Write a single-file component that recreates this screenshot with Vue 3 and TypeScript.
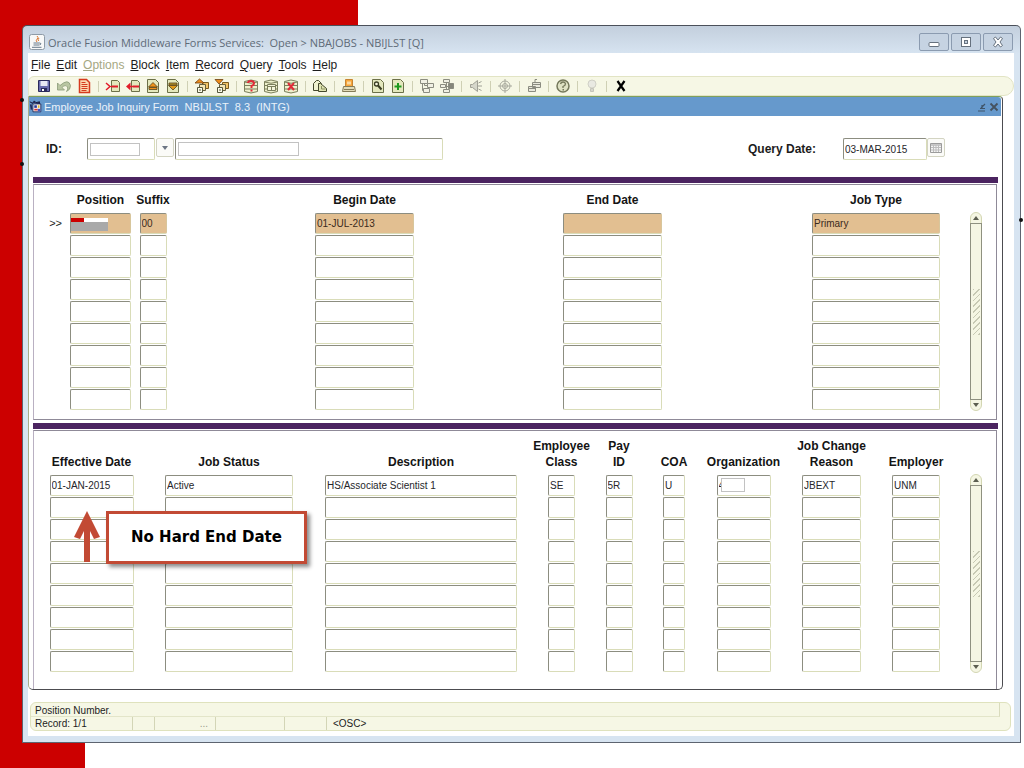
<script setup lang="ts">
import { ref } from 'vue'

interface Column {
  key: string
  lines: string[]
}

interface Tool {
  name: string
  art: string
}

const menus = ['File', 'Edit', 'Options', 'Block', 'Item', 'Record', 'Query', 'Tools', 'Help']

const page = '<path d="M2.5 1.5h8l3 3v10h-11z" fill="#e4e8bd" stroke="#6c7048"/>'
const drum =
  '<path d="M1.500 3.500q6.500-3 13 0v10q-6.500 3-13 0z" fill="#eef0cc" stroke="#7b7f5c"/><path d="M1.500 4q6.500 2.500 13 0M1.500 7.500h13M1.500 11h13" fill="none" stroke="#7b7f5c"/>'
const cards =
  '<path d="M8.500 4.500h6v6h-6z" fill="#f0c468" stroke="#7a5a1c"/><path d="M5.500 6.500h6v6h-6z" fill="#f4e6b4" stroke="#66603c"/><path d="M3.500 9.500h5v5h-5z" fill="#fbfbe8" stroke="#55573c"/><path d="M5 12h2" stroke="#55573c"/>'

const toolGroups: Tool[][] = [
  [
    { name: 'Save', art: '<path d="M2.500 2.500h11v11h-11z" fill="#6a6cae" stroke="#2a2a5c"/><path d="M4.500 3h7v5h-7z" fill="#e8e8f4"/><path d="M5 10h6v3.500H5z" fill="#2a2a5c"/><path d="M6 11h2v2H6z" fill="#fff"/>' },
    { name: 'Rollback', art: '<path d="M1.500 5v7h7L6 9.500q3.500-3.500 5.500-.5 1 2-1 4.500 4-1.500 4-6Q12.500 0 4 7.500z" fill="#b9c6a2" stroke="#8a9a78" stroke-width=".8"/>' },
    { name: 'Select', art: '<path d="M3.500 1.500h7l3 3v10h-10z" fill="#fbd9b0" stroke="#d63a1e" stroke-width="1.500"/><path d="M5.500 4.500h4M5.500 6.500h6M5.500 8.500h6M5.500 10.500h6M5.500 12.500h5" stroke="#d63a1e"/>' }
  ],
  [
    { name: 'Insert Record', art: '<path d="M6.500 2.500h6l2 2v9h-8z" fill="#e4e8bd" stroke="#6c7048"/><path d="M7 7.500h6v2H7z" fill="#e11d2b"/><path d="M1 5l4 3.500L1 12" fill="none" stroke="#e11d2b" stroke-width="1.500"/><path d="M5 8.500h2" stroke="#e11d2b"/>' },
    { name: 'Remove Record', art: '<path d="M6.500 2.500h6l2 2v9h-8z" fill="#e4e8bd" stroke="#6c7048"/><path d="M8 7.500h6v2H8z" fill="#e11d2b"/><path d="M5.500 4.500v8L1 8.500z" fill="#e11d2b"/><path d="M5 8.500h3" stroke="#e11d2b" stroke-width="1.500"/>' },
    { name: 'Previous Record', art: page + '<path d="M8 4.500l4.500 4.500h-9z" fill="#f0921c" stroke="#55431c" stroke-width=".8"/><path d="M4 9.500h8v2H4z" fill="#f0921c" stroke="#55431c" stroke-width=".8"/>' },
    { name: 'Next Record', art: page + '<path d="M4 5h8v2H4z" fill="#bd9a2e" stroke="#55431c" stroke-width=".8"/><path d="M3.500 7.500h9L8 12z" fill="#e09a1c" stroke="#55431c" stroke-width=".8"/>' }
  ],
  [
    { name: 'Previous Block', art: cards + '<path d="M5.500 1L10 5H1z" fill="#ef8c1a" stroke="#6b3f10" stroke-width=".8"/>' },
    { name: 'Next Block', art: cards + '<path d="M1 1.500h8L5 6z" fill="#ef8c1a" stroke="#6b3f10" stroke-width=".8"/>' }
  ],
  [
    { name: 'Enter Query', art: drum + '<path d="M5 5q0-2 3-2t3 2.500Q11 7 8.500 8v2" fill="none" stroke="#e02a38" stroke-width="2"/><path d="M7.500 11.500h2v2h-2z" fill="#e02a38"/>' },
    { name: 'Execute Query', art: drum + '<path d="M4.500 6.500h8v6h-8z" fill="#f4f5dc" stroke="#7b7f5c"/><path d="M4.500 8.500h8M8.500 8v4" stroke="#7b7f5c"/>' },
    { name: 'Cancel Query', art: drum + '<path d="M5 5l6 7M11 5l-6 7" stroke="#e02a38" stroke-width="2"/>' }
  ],
  [
    { name: 'View Messages', art: '<path d="M1.500 5.500l3-3h2l3 3v7h-8z" fill="#f0f2d0" stroke="#44482c"/><path d="M6.500 5.500h2l6 5v3h-8z" fill="#dfe4b2" stroke="#44482c"/><path d="M9.500 8v3h4" fill="none" stroke="#8b9060"/>' }
  ],
  [
    { name: 'Print', art: '<path d="M4.500 1.500h7v7h-7z" fill="#f6a53a" stroke="#c78432"/><path d="M6 3.500h4v3H6z" fill="#fbd9a0"/><path d="M2.500 8.500h11l1 5h-13z" fill="#e2dcb8" stroke="#857c58"/><path d="M3 11.500h10" stroke="#857c58"/>' }
  ],
  [
    { name: 'Online Query', art: page + '<circle cx="6.500" cy="6" r="2" fill="#f8f8e0" stroke="#3a3d22" stroke-width="1.300"/><path d="M8 7.500l3.500 4" stroke="#3a3d22" stroke-width="2"/>' },
    { name: 'Add Item', art: page + '<path d="M8 5v7M4.500 8.500h7" stroke="#1e9a1e" stroke-width="2"/>' }
  ],
  [
    { name: 'Fine Grained Access', art: '<g fill="#f1f1e4" stroke="#8b8c80"><path d="M1.500 1.500h7v4h-7zM8.500 5.500h6v4h-6zM4.500 10.500h6v4h-6z"/><path d="M3.500 5.500v7h1M5.500 5.500v2h3" fill="none"/></g>' },
    { name: 'Workflow', art: '<g fill="#f1f1e4" stroke="#8b8c80"><path d="M4.500 1.500h6v3h-6zM1.500 6.500h5v3h-5zM4.500 11.500h6v3h-6z"/><path d="M9.500 5.500h5v5h-5z" fill="#85867a"/><path d="M6.500 8.500h3M7.500 4.500v7" fill="none"/></g>' }
  ],
  [
    { name: 'Announcements', art: '<path d="M2.500 6.500h2l5-4v11l-5-4h-2z" fill="#d6d7cb" stroke="#a0a196"/><path d="M10 8h4M10.500 5l3-1.500M10.500 11l3 1.500" stroke="#a0a196"/>' }
  ],
  [
    { name: 'Locate', art: '<circle cx="8" cy="8" r="5" fill="none" stroke="#a9aa9e"/><circle cx="8" cy="8" r="2.500" fill="none" stroke="#a9aa9e"/><path d="M8 1v14M1 8h14" stroke="#a9aa9e"/>' }
  ],
  [
    { name: 'Transfer', art: '<g fill="#e9e9dc" stroke="#8b8c80"><path d="M6.500 4.500h8v5h-8zM2.500 8.500h7v5h-7z"/><path d="M6.500 6.500h8M2.500 10.500h7M9 4V1.500h2" fill="none"/></g>' }
  ],
  [
    { name: 'Online Help', art: '<circle cx="8" cy="8" r="6" fill="#dfe2c4" stroke="#74785a" stroke-width="1.500"/><path d="M5.500 6q.5-2 2.500-2t2.500 1.800Q10.500 7.500 8 8.500V10" fill="none" stroke="#74785a" stroke-width="1.300"/><path d="M7.500 11h1.500v1.500H7.500z" fill="#74785a"/>' }
  ],
  [
    { name: 'Hint', art: '<circle cx="8" cy="6" r="4" fill="#e9e9e2" stroke="#d0d0c6"/><path d="M6.500 10.500h3v3h-3z" fill="#d6d6cc" stroke="#c4c4ba"/>' }
  ],
  [
    { name: 'Exit', art: '<path d="M4.500 3l7 10M11.500 3l-7 10" stroke="#000" stroke-width="2.200"/>' }
  ]
]

const jobColumns: Column[] = [
  { key: 'position', lines: ['Position'] },
  { key: 'suffix', lines: ['Suffix'] },
  { key: 'begin', lines: ['Begin Date'] },
  { key: 'end', lines: ['End Date'] },
  { key: 'type', lines: ['Job Type'] }
]

const detailColumns: Column[] = [
  { key: 'effective', lines: ['Effective Date'] },
  { key: 'status', lines: ['Job Status'] },
  { key: 'description', lines: ['Description'] },
  { key: 'class', lines: ['Employee', 'Class'] },
  { key: 'pay', lines: ['Pay', 'ID'] },
  { key: 'coa', lines: ['COA'] },
  { key: 'organization', lines: ['Organization'] },
  { key: 'reason', lines: ['Job Change', 'Reason'] },
  { key: 'employer', lines: ['Employer'] }
]

function withBlankRows(first: Record<string, string>): Record<string, string>[] {
  return [first, ...Array.from({ length: 8 }, () => ({}))]
}

const jobs = ref(withBlankRows({ suffix: '00', begin: '01-JUL-2013', type: 'Primary' }))
const details = ref(
  withBlankRows({
    effective: '01-JAN-2015',
    status: 'Active',
    description: 'HS/Associate Scientist 1',
    class: 'SE',
    pay: '5R',
    coa: 'U',
    organization: '4',
    reason: 'JBEXT',
    employer: 'UNM'
  })
)

const personId = ref('')
const personName = ref('')
const queryDate = ref('03-MAR-2015')
</script>

<template>
  <div class="slide">
    <i class="handle handle-a"></i>
    <i class="handle handle-b"></i>
    <i class="handle handle-c"></i>

    <div class="window">
      <header class="titlebar">
        <svg class="java" viewBox="0 0 16 16" aria-hidden="true">
          <rect x=".5" y=".5" width="15" height="15" rx="2" fill="#f7f8f8" stroke="#8e9aa6" />
          <path d="M8 2q2 1.500 0 3.200Q6.500 6.800 8 8M10 4q-1.500 1.500-.5 3" fill="none" stroke="#d8742c" />
          <path d="M4.500 9h6q2.500 0 .5 2M4.500 11h6M3 13.300h9.500" fill="none" stroke="#66788a" />
        </svg>
        <span class="caption">Oracle Fusion Middleware Forms Services:&nbsp; Open &gt; NBAJOBS - NBIJLST [Q]</span>
        <button class="winbtn" type="button" aria-label="Minimize">
          <svg viewBox="0 0 14 14"><rect x="2" y="7.500" width="10" height="4" rx="1" fill="#fff" stroke="#66717e" /></svg>
        </button>
        <button class="winbtn" type="button" aria-label="Maximize">
          <svg viewBox="0 0 14 14">
            <rect x="2.500" y="2.500" width="9" height="9" fill="#fff" stroke="#66717e" />
            <rect x="5.500" y="5.500" width="3" height="3" fill="#c4d0de" stroke="#66717e" />
          </svg>
        </button>
        <button class="winbtn" type="button" aria-label="Close">
          <svg viewBox="0 0 14 14">
            <path d="M2.500 3.500L4.500 2 7 5l2.500-3 2 1.500L9 7l2.500 3.500-2 1.500L7 9l-2.500 3-2-1.500L5 7z" fill="#fff" stroke="#66717e" />
          </svg>
        </button>
      </header>

      <main class="client">
        <nav class="menubar">
          <button v-for="menu in menus" :key="menu" type="button" :disabled="menu === 'Options'"><u>{{ menu[0] }}</u>{{ menu.slice(1) }}</button>
        </nav>

        <div class="toolbar">
          <div v-for="(group, g) in toolGroups" :key="g" class="group">
            <button v-for="tool in group" :key="tool.name" type="button" :aria-label="tool.name">
              <svg viewBox="0 0 16 16" v-html="tool.art"></svg>
            </button>
          </div>
        </div>

        <section class="form">
          <div class="formbar">
            <svg class="formicon" viewBox="0 0 16 16" aria-hidden="true">
              <path d="M1 2l3 2 2-3 2 2 4-1v3" fill="#222a5a" stroke="#15183a" />
              <path d="M4.500 4.500h9v9h-9z" fill="#fff" stroke="#1c2150" />
              <path d="M6 6h3v3H6z" fill="#27389c" />
              <path d="M10 6h2v3h-2z" fill="#e3b42c" />
              <path d="M6 10h4v2H6z" fill="#d4342c" />
              <path d="M10 10h3v3h-3z" fill="#3d56c4" />
              <path d="M2 5l1 6" stroke="#222a5a" stroke-width="2" />
            </svg>
            <h1>Employee Job Inquiry Form&nbsp; NBIJLST&nbsp; 8.3&nbsp; (INTG)</h1>
            <button type="button" aria-label="Restore form">
              <svg viewBox="0 0 10 10"><path d="M1 9h7M3 6.500h4M4 6l4-4M5 3v3.500h3" fill="none" stroke="#3f5468" stroke-width="1.200" /></svg>
            </button>
            <button type="button" aria-label="Close form">
              <svg viewBox="0 0 10 10"><path d="M1.500 1.500l7 7M8.500 1.500l-7 7" stroke="#45525e" stroke-width="1.800" /></svg>
            </button>
          </div>

          <div class="keyblock">
            <label for="person-id">ID:</label>
            <span class="cover-wrap key-id">
              <input id="person-id" v-model="personId" class="field tall" type="text" />
              <i class="cover cover-id"></i>
            </span>
            <button class="lov" type="button" aria-label="Search ID">
              <svg viewBox="0 0 8 8"><path d="M1 2h6L4 6z" fill="#6d7684" /></svg>
            </button>
            <span class="cover-wrap key-name">
              <input v-model="personName" class="field tall" type="text" aria-label="Name" />
              <i class="cover cover-name"></i>
            </span>
            <label class="date-label" for="query-date">Query Date:</label>
            <input id="query-date" v-model="queryDate" class="field tall key-date" type="text" />
            <button class="calendar" type="button" aria-label="Calendar">
              <svg viewBox="0 0 12 12">
                <path d="M.5 1.500h11v9H.5z" fill="#f4f4f4" stroke="#9b9b9b" />
                <path d="M1 3h10" stroke="#9b9b9b" />
                <path d="M1 5.500h10M1 8h10M3.500 3v7M6 3v7M8.500 3v7" stroke="#bdbdbd" />
              </svg>
            </button>
          </div>

          <div class="rule"></div>
          <section class="panel jobs">
            <table>
              <colgroup>
                <col class="c-marker" />
                <col v-for="col in jobColumns" :key="col.key" :class="'c-' + col.key" />
              </colgroup>
              <thead>
                <tr>
                  <td></td>
                  <th v-for="col in jobColumns" :key="col.key" scope="col" :class="'h-' + col.key">{{ col.lines[0] }}</th>
                </tr>
              </thead>
              <tbody>
                <tr v-for="(row, r) in jobs" :key="r" :class="{ current: r === 0 }">
                  <td class="marker">{{ r === 0 ? '&gt;&gt;' : '' }}</td>
                  <td v-for="col in jobColumns" :key="col.key" :class="'h-' + col.key">
                    <span class="cover-wrap" :class="'f-' + col.key">
                      <input v-model="row[col.key]" class="field" type="text" :aria-label="col.lines.join(' ') + ' ' + (r + 1)" />
                      <i v-if="r === 0 && col.key === 'position'" class="cover-position"></i>
                    </span>
                  </td>
                </tr>
              </tbody>
            </table>
            <div class="scroll">
              <button type="button" aria-label="Scroll jobs up"><svg viewBox="0 0 6 4"><path d="M0 4l3-4 3 4z" fill="#5c5e50" /></svg></button>
              <span class="track"><i></i></span>
              <button type="button" aria-label="Scroll jobs down"><svg viewBox="0 0 6 4"><path d="M0 0h6L3 4z" fill="#5c5e50" /></svg></button>
            </div>
          </section>

          <div class="rule"></div>
          <section class="panel details">
            <table>
              <colgroup>
                <col v-for="col in detailColumns" :key="col.key" :class="'c-' + col.key" />
              </colgroup>
              <thead>
                <tr>
                  <th v-for="col in detailColumns" :key="col.key" scope="col">
                    <template v-for="(line, i) in col.lines" :key="line"><br v-if="i > 0" />{{ line }}</template>
                  </th>
                </tr>
              </thead>
              <tbody>
                <tr v-for="(row, r) in details" :key="r">
                  <td v-for="col in detailColumns" :key="col.key">
                    <span class="cover-wrap" :class="'f-' + col.key">
                      <input v-model="row[col.key]" class="field" type="text" :aria-label="col.lines.join(' ') + ' ' + (r + 1)" />
                      <i v-if="r === 0 && col.key === 'organization'" class="cover cover-org"></i>
                    </span>
                  </td>
                </tr>
              </tbody>
            </table>
            <div class="scroll">
              <button type="button" aria-label="Scroll details up"><svg viewBox="0 0 6 4"><path d="M0 4l3-4 3 4z" fill="#5c5e50" /></svg></button>
              <span class="track"><i></i></span>
              <button type="button" aria-label="Scroll details down"><svg viewBox="0 0 6 4"><path d="M0 0h6L3 4z" fill="#5c5e50" /></svg></button>
            </div>
            <svg class="arrow" viewBox="0 0 26 52" aria-hidden="true">
              <path d="M13 0L26 26 20 28 16 20V51H10V20L6 28 0 26z" fill="#c24a34" />
            </svg>
            <p class="callout">No Hard End Date</p>
          </section>
        </section>

        <footer class="status">
          <div class="hint">Position Number.</div>
          <div class="cells">
            <span class="cell record">Record: 1/1</span>
            <span class="cell tiny"></span>
            <span class="cell dots">...</span>
            <span class="cell mid"></span>
            <span class="cell short"></span>
            <span class="osc">&lt;OSC&gt;</span>
          </div>
        </footer>
      </main>
    </div>
  </div>
</template>

<style>
body {
  margin: 0;
  background: #fff;
}
</style>

<style scoped>
* {
  box-sizing: border-box;
}

button {
  margin: 0;
  padding: 0;
  border: 0;
  background: none;
  font: inherit;
  color: inherit;
}

svg {
  display: block;
}

.slide {
  position: relative;
  min-height: 100vh;
  padding: 25px 3px 25px 22px;
  font-family: "Liberation Sans", Arial, sans-serif;
  font-size: 12px;
  color: #1c1c1c;
  background:
    linear-gradient(#cc0000, #cc0000) 0 0 / 358px 80px no-repeat,
    linear-gradient(#cc0000, #cc0000) 0 0 / 85px 100% no-repeat,
    #fff;
}

.handle {
  position: absolute;
  width: 4px;
  height: 4px;
  border-radius: 2px;
  background: #111;
}
.handle-a {
  left: 20px;
  top: 98px;
}
.handle-b {
  left: 20px;
  top: 162px;
}
.handle-c {
  right: 1px;
  top: 218px;
}

.window {
  padding: 0 6px 6px 5px;
  border: 1px solid #5d6470;
  border-top-color: #4b505a;
  border-radius: 5px 5px 0 0;
  background: linear-gradient(#c3cfdd, #d7e4f1 28px);
}

.titlebar {
  display: flex;
  align-items: flex-start;
  height: 27px;
}
.java {
  width: 16px;
  height: 16px;
  margin: 8px 3px 0 1px;
}
.caption {
  flex: 1;
  padding-top: 8px;
  font-family: "Open Sans", "Noto Sans", sans-serif;
  font-size: 11px;
  line-height: 18px;
  color: #5f6b78;
}
.winbtn {
  display: grid;
  place-items: center;
  width: 30px;
  height: 18px;
  margin: 7px 0 0 2px;
  border: 1px solid #8b9bb0;
  border-radius: 2px;
  background: #c6d3e2;
}
.winbtn:last-child {
  margin-right: 1px;
}
.winbtn svg {
  width: 14px;
  height: 14px;
}

.client {
  padding-bottom: 5px;
  background: #fff;
}

.menubar {
  display: flex;
  gap: 6px;
  height: 23px;
  padding-left: 3px;
  line-height: 24px;
}
.menubar button:disabled {
  color: #a5a783;
}
.menubar u {
  text-underline-offset: 1px;
}

.toolbar {
  display: flex;
  align-items: center;
  height: 20px;
  padding-left: 5px;
  border: 1px solid #e2e4c4;
  border-radius: 6px 10px 10px 0;
  background: #f6f7e5;
}
.group {
  display: flex;
  align-items: center;
}
.group + .group::before {
  content: "";
  width: 1px;
  height: 11px;
  margin: 0 4px;
  background: #cfd0b4;
}
.toolbar button {
  display: grid;
  place-items: center;
  width: 20px;
  height: 18px;
}
.toolbar svg {
  width: 16px;
  height: 16px;
}

.form {
  margin-right: 11px;
  border: 1px solid #4c4c50;
  border-top-color: #7fa05c;
  border-left-color: #a9ad88;
  border-radius: 0 4px 5px 5px;
}
.formbar {
  display: flex;
  align-items: center;
  height: 19px;
  margin-right: 1px;
  padding-right: 2px;
  border-radius: 0 3px 0 0;
  background: #6699cc;
}
.formicon {
  width: 14px;
  height: 14px;
  margin-right: 1px;
}
.formbar h1 {
  flex: 1;
  margin: 0;
  font-size: 11px;
  font-weight: 400;
  color: #eaf2fa;
}
.formbar button {
  margin-left: 2px;
}
.formbar button svg {
  width: 10px;
  height: 10px;
}

.keyblock {
  display: flex;
  align-items: flex-start;
  height: 61px;
  padding: 22px 57px 0 17px;
}
.keyblock label {
  font-weight: 700;
  line-height: 22px;
}
.cover-wrap {
  position: relative;
  display: block;
}
.key-id {
  width: 68px;
  margin-left: 25px;
}
.key-name {
  width: 268px;
}
.date-label {
  margin-left: auto;
  margin-right: 27px;
}
.field.key-date {
  width: 84px;
}
.field {
  display: block;
  width: 100%;
  height: 21px;
  margin: 0;
  padding: 0 1px;
  border: 1px solid #d9dcb8;
  border-top-color: #8c8d80;
  border-left-color: #8c8d80;
  border-radius: 2px;
  outline: 0;
  background: #fff;
  font-family: "Liberation Sans", Arial, sans-serif;
  font-size: 10px;
  color: #26262a;
}
.field.tall {
  height: 22px;
}
.lov,
.calendar {
  display: grid;
  place-items: center;
  width: 18px;
  height: 19px;
  border: 1px solid #d3d4c2;
  border-radius: 2px;
  background: #fbfbf8;
}
.lov {
  margin: 0 1px;
}
.lov svg {
  width: 8px;
  height: 8px;
}
.calendar svg {
  width: 12px;
  height: 12px;
}
.cover {
  position: absolute;
  border: 1px solid #c2c2c2;
  background: #fff;
}
.cover-id {
  left: 3px;
  top: 5px;
  width: 50px;
  height: 13px;
}
.cover-name {
  left: 3px;
  top: 4px;
  width: 121px;
  height: 14px;
}
.cover-org {
  left: 4px;
  top: 3px;
  width: 24px;
  height: 14px;
}
.cover-position {
  position: absolute;
  left: 1px;
  top: 5px;
  width: 37px;
  height: 13px;
  background:
    linear-gradient(#cc0000, #cc0000) 0 0 / 13px 4px no-repeat,
    linear-gradient(#fff, #fff) 0 0 / 100% 4px no-repeat,
    #a9a9a9;
}

.rule {
  height: 6px;
  margin: 0 4px 1px;
  background: #4b2460;
}
.panel {
  position: relative;
  display: flex;
  margin: 0 5px 0 4px;
  border: 1px solid #8f8a98;
  border-left-color: #b9b0c2;
}
.jobs {
  margin-bottom: 3px;
  padding-bottom: 8px;
}
.details {
  padding-bottom: 16px;
  border-bottom: 0;
}

table {
  flex: 1;
  width: 100%;
  table-layout: fixed;
  border-collapse: collapse;
}
th,
td {
  padding: 0;
}
th {
  font-size: 12px;
  font-weight: 700;
  line-height: 16px;
  text-align: center;
  vertical-align: bottom;
  white-space: nowrap;
  color: #141414;
}
.jobs thead tr {
  height: 28px;
}
.details thead tr {
  height: 44px;
}
.panel th {
  padding-bottom: 5px;
}
tbody tr {
  height: 22px;
}
tbody td {
  vertical-align: top;
}
td .cover-wrap {
  margin: 0 auto;
}
.marker {
  padding-right: 3px;
  font-size: 11px;
  line-height: 20px;
  text-align: right;
}
.current .field {
  background: #e2bf91;
  border-right-color: #d8c69c;
  color: #3a2a1c;
}

.c-marker { width: 31px; }
.c-position { width: 71px; }
.c-suffix { width: 34px; }
.c-begin { width: 389px; }
.c-end { width: 107px; }
.c-type { width: 294px; }
.h-type { padding-left: 126px; }
.c-effective { width: 115px; }
.c-status { width: 160px; }
.c-description { width: 224px; }
.c-class { width: 57px; }
.c-pay { width: 58px; }
.c-coa { width: 52px; }
.c-organization { width: 87px; }
.c-reason { width: 89px; }
.c-employer { width: 80px; }

.f-position { width: 61px; }
.f-suffix,
.f-class,
.f-pay { width: 27px; }
.f-begin,
.f-end { width: 99px; }
.f-type,
.f-status { width: 128px; }
.f-effective { width: 84px; }
.f-description { width: 192px; }
.f-coa { width: 22px; }
.f-organization { width: 54px; }
.f-reason { width: 59px; }
.f-employer { width: 48px; }

.scroll {
  display: flex;
  flex: none;
  flex-direction: column;
  width: 12px;
  margin: 27px 14px 0 10px;
  border: 1px solid #d3d6b2;
  border-radius: 6px;
  background: #f5f6e3;
}
.details .scroll {
  margin: 43px 14px 0;
}
.scroll button {
  display: grid;
  place-items: center;
  height: 10px;
}
.scroll button svg {
  width: 6px;
  height: 4px;
}
.track {
  display: grid;
  place-items: center;
  flex: 1;
  margin: 0 -1px;
  border: 1px solid #8f9180;
}
.track i {
  width: 7px;
  height: 46px;
  background: repeating-linear-gradient(135deg, #b4b69f 0 1px, transparent 1px 4px);
  opacity: 0.7;
}

.arrow {
  position: absolute;
  left: 40px;
  top: 80px;
  width: 26px;
  height: 52px;
}
.callout {
  position: absolute;
  left: 72px;
  top: 80px;
  margin: 0;
  padding: 0 22px;
  border: 3px solid #c24a34;
  background: #fff;
  box-shadow: 3px 3px 4px rgba(0, 0, 0, 0.45);
  font-family: "DejaVu Sans", sans-serif;
  font-size: 15px;
  font-weight: 900;
  line-height: 47px;
  white-space: nowrap;
  color: #000;
}

.status {
  margin: 12px 3px 0 2px;
  border: 1px solid #dfe2bd;
  border-radius: 6px;
  background: #f6f7e5;
  font-size: 10px;
}
.hint {
  height: 14px;
  margin-right: 10px;
  padding-left: 4px;
  border-right: 1px solid #d9dbbd;
  border-bottom: 1px solid #e3e5c9;
  line-height: 15px;
}
.cells {
  display: flex;
  height: 13px;
  padding-left: 4px;
  line-height: 13px;
}
.cell {
  border-right: 1px solid #d3d5b6;
}
.record { width: 98px; }
.tiny { width: 22px; }
.dots {
  width: 61px;
  padding-right: 7px;
  text-align: right;
  color: #9a9b8c;
}
.mid { width: 69px; }
.short { width: 42px; }
.osc {
  padding-left: 6px;
}
</style>
